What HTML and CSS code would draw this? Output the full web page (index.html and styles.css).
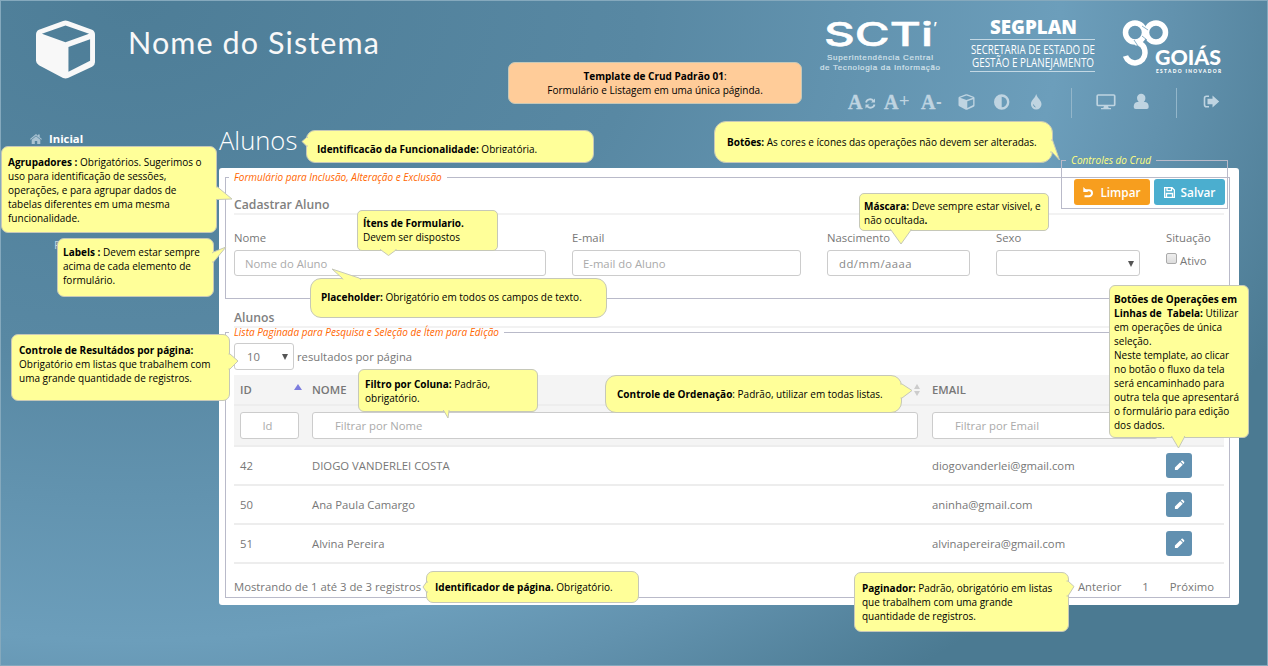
FILE: index.html
```html
<!DOCTYPE html>
<html lang="pt-BR">
<head>
<meta charset="utf-8">
<title>Nome do Sistema</title>
<link rel="stylesheet" href="styles.css">
</head>
<body>
<svg class="defs" width="0" height="0">
  <symbol id="cube" viewBox="0 0 60 60"><path fill="currentColor" fill-rule="evenodd" d="M27.500 1 Q30 0 32.500 1 L57 10 Q60 11.500 60 15 V43 Q60 46 57 47.500 L32.500 59 Q30 60 27.500 59 L3 46 Q0 44 0 41.500 V15 Q0 11.500 3 10Z M30 5.500 L6 14 L30 22.500 L54 14Z M33 27.500 V52.500 L55 41.500 V19.500Z"/></symbol>
  <symbol id="pencil" viewBox="0 0 12 12"><path fill="#fff" d="M1 8.200 L6.800 2.400 L9.600 5.200 L3.800 11 H1Z M7.500 1.700 L8.400 .9 Q9 .4 9.600 .9 L11.100 2.400 Q11.600 3 11.100 3.600 L10.300 4.500Z"/></symbol>
</svg>
<div class="app">
  <header class="header">
    <svg class="brand-icon"><use href="#cube"/></svg>
    <h1 class="system-name">Nome do Sistema</h1>
    <div class="header-right">
      <div class="logos">
        <svg class="logo-scti" viewBox="0 0 122 58" width="122" height="58">
          <g fill="#fff" font-family="Inter, sans-serif">
            <text x="4" y="27.500" font-size="33" font-weight="500" stroke="#fff" stroke-width=".5" textLength="109" lengthAdjust="spacingAndGlyphs">SCTi</text>
            <text x="113" y="15" font-size="14" font-weight="600">’</text>
            <g font-family="Liberation Sans, Arial, sans-serif" font-size="8" fill="#d3e1ea" stroke="#d3e1ea" stroke-width=".2">
              <text x="7" y="42" textLength="106">Superintendência Central</text>
              <text x="0" y="52" textLength="120">de Tecnologia da Informação</text>
            </g>
          </g>
        </svg>
        <svg class="logo-segplan" viewBox="0 0 126 58" width="126" height="58">
          <g fill="#fff" font-family="Open Sans, sans-serif">
            <text x="20" y="16" font-size="18.500" font-weight="800" textLength="87" lengthAdjust="spacingAndGlyphs">SEGPLAN</text>
            <path d="M0 21.500H125M0 53.500H125" stroke="#c3d8e4"/>
            <text x="1" y="36" font-size="12.500" textLength="124" lengthAdjust="spacingAndGlyphs">SECRETARIA DE ESTADO DE</text>
            <text x="2" y="49" font-size="12.500" textLength="122" lengthAdjust="spacingAndGlyphs">GESTÃO E PLANEJAMENTO</text>
          </g>
        </svg>
        <svg class="logo-goias" viewBox="0 0 100 58" width="100" height="58">
          <g fill="none" stroke="#fff" stroke-width="5.500">
            <circle cx="13" cy="14.500" r="9.500"/><circle cx="34" cy="14.500" r="9.500"/>
            <path d="M13 24.500Q23 25 23 35A10 10 0 0 1 3.500 38"/>
          </g>
          <path d="M12 22l4 6M20 8l6 4M20 18l5 4" stroke="#6c9db9" stroke-width=".8"/>
          <g fill="#fff" font-family="Lato, sans-serif">
            <text x="33" y="47" font-size="21" font-weight="900" textLength="66" lengthAdjust="spacingAndGlyphs">GOIÁS</text>
            <text x="34" y="54.500" font-size="4.800" font-weight="900" textLength="65">ESTADO INOVADOR</text>
          </g>
        </svg>
      </div>
      <svg class="toolbar" viewBox="840 84 390 36" width="390" height="36">
        <g fill="#bfd4e1" stroke="none" font-family="Liberation Serif, serif" font-weight="bold" font-size="20">
          <g stroke="#bfd4e1" stroke-width=".4"><text x="848" y="109">A</text><text x="884" y="109">A</text><text x="921" y="109">A</text></g>
          <text x="899" y="107" font-family="Liberation Sans, sans-serif" font-weight="normal" font-size="18">+</text>
          <text x="936" y="107" font-family="Liberation Sans, sans-serif" font-size="17">-</text>
        </g>
        <g fill="none" stroke="#bfd4e1" stroke-width="1.800"><path d="M866 102.500a4.200 4.200 0 0 1 7.500-1.500M874.500 104.500a4.200 4.200 0 0 1-7.500 1.500"/></g>
        <path fill="#bfd4e1" d="M875 98.500v4h-4zM865.500 108.500v-4h4z"/>
        <use href="#cube" x="958" y="94" width="17" height="16" color="#bfd4e1"/>
        <path fill="#bfd4e1" fill-rule="evenodd" d="M994 102a7.700 7.700 0 1 0 15.400 0a7.700 7.700 0 1 0-15.400 0M1001.700 96.700v10.600a5.300 5.300 0 0 0 0-10.600"/>
        <path fill="#bfd4e1" d="M1036.200 94c.8 3.700 5.300 6.500 5.300 10.200a5.300 5.300 0 0 1-10.600 0c0-3.700 4.500-6.500 5.300-10.200"/>
        <path d="M1033.500 104.500q0 2 2 2.500" stroke="#6b9cb8" fill="none"/>
        <path d="M1071.500 88V118M1176.500 88V118" stroke="#93b6ca"/>
        <rect x="1097.200" y="95" width="17.500" height="10.500" rx="1" fill="none" stroke="#bfd4e1" stroke-width="1.700"/>
        <path fill="#bfd4e1" d="M1104 106h4l.7 2h2.300v1.300h-10V108h2.300z"/>
        <path fill="#bfd4e1" d="M1137 98a4.200 4.200 0 1 1 8.400 0c0 2-.7 3.200-1.700 4h1.500q3.500.5 3.500 5q0 2-2 2h-11q-2 0-2-2q0-4.500 3.500-5h1.500q-1.700-1.500-1.700-4"/>
        <path d="M1209 96.300h-2.500q-2 0-2 2v6.500q0 2 2 2h2.500" fill="none" stroke="#bfd4e1" stroke-width="1.600"/>
        <path fill="#bfd4e1" d="M1207.500 98.800h5v-3.300l6.700 6-6.700 6v-3.300h-5z"/>
      </svg>
    </div>
  </header>

  <div class="body">
    <nav class="sidebar">
      <a class="nav-home"><svg width="12" height="10" viewBox="0 0 12 10"><path fill="#aac3d2" d="M0 5L6 0l2 1.700V.5h1.700v2.700L12 5l-.7.800L6 1.500.7 5.800zM1.700 5.700L6 2.300l4.300 3.400V10H7.200V7H4.800v3H1.700z"/></svg>Inicial</a>
      <a class="nav-item">F</a>
    </nav>
    <main class="main">
      <h2 class="page-title">Alunos</h2>
      <section class="panel">
        <div class="section-head form-head">
          <h3>Cadastrar Aluno</h3>
          <div class="actions">
            <button class="btn btn-clear"><svg width="11" height="11" viewBox="0 0 11 11"><path d="M2 3.200H6a2.800 2.800 0 0 1 0 6H1.500" fill="none" stroke="#fff" stroke-width="2"/><path fill="#fff" d="M.3 0v5h5z"/></svg>Limpar</button>
            <button class="btn btn-save"><svg width="11" height="11" viewBox="0 0 11 11"><path d="M.6.600H8L10.400 3v7.400H.6zM3 .6v3h4.500v-3M2.500 10.400V6.500h6v3.900" fill="none" stroke="#fff" stroke-width="1.300"/></svg>Salvar</button>
          </div>
        </div>
        <div class="form">
          <div class="field"><span>Nome</span><div class="input">Nome do Aluno</div></div>
          <div class="field"><span>E-mail</span><div class="input">E-mail do Aluno</div></div>
          <div class="field"><span>Nascimento</span><div class="input date">dd/mm/aaaa</div></div>
          <div class="field"><span>Sexo</span><div class="input select"><i class="caret"></i></div></div>
          <div class="field"><span>Situação</span><div class="check"><i class="box"></i>Ativo</div></div>
        </div>
        <div class="section-head list-head"><h3>Alunos</h3></div>
        <div class="page-size"><div class="input select size">10<i class="caret"></i></div>resultados por página</div>
        <div class="table">
          <div class="row head"><div>ID<i class="asc"></i></div><div>NOME<i class="sort"></i></div><div>EMAIL</div><div></div></div>
          <div class="row filters"><div><div class="input center">Id</div></div><div><div class="input wide">Filtrar por Nome</div></div><div><div class="input wide">Filtrar por Email</div></div><div></div></div>
          <div class="row"><div>42</div><div>DIOGO VANDERLEI COSTA</div><div>diogovanderlei@gmail.com</div><div><button class="edit"><svg><use href="#pencil"/></svg></button></div></div>
          <div class="row"><div>50</div><div>Ana Paula Camargo</div><div>aninha@gmail.com</div><div><button class="edit"><svg><use href="#pencil"/></svg></button></div></div>
          <div class="row"><div>51</div><div>Alvina Pereira</div><div>alvinapereira@gmail.com</div><div><button class="edit"><svg><use href="#pencil"/></svg></button></div></div>
        </div>
        <div class="list-foot"><span>Mostrando de 1 até 3 de 3 registros</span><div class="pager"><a>Anterior</a><a>1</a><a>Próximo</a></div></div>
      </section>
    </main>
  </div>

  <fieldset class="frame frame-form"><legend>Formulário para Inclusão, Alteração e Exclusão</legend></fieldset>
  <fieldset class="frame frame-list"><legend>Lista Paginada para Pesquisa e Seleção de Ítem para Edição</legend></fieldset>
  <fieldset class="frame frame-crud"><legend>Controles do Crud</legend></fieldset>

  <div class="note n-template"><b>Template de Crud Padrão 01</b>:<br>Formulário e Listagem em uma única páginda.</div>
  <div class="note n-group"><b>Agrupadores :</b> Obrigatórios. Sugerimos o<br>uso para identificação de sessões,<br>operações, e para agrupar dados de<br>tabelas diferentes em uma mesma<br>funcionalidade.</div>
  <div class="note n-labels"><b>Labels :</b> Devem estar sempre<br>acima de cada elemento de<br>formulário.</div>
  <div class="note n-title"><div class="clip"><b>Identificação da Funcionalidade:</b> Obrigatória.</div></div>
  <div class="note n-buttons"><b>Botões:</b> As cores e ícones das operações não devem ser alteradas.</div>
  <div class="note n-items"><b>Ítens de Formulario.</b><br>Devem ser dispostos</div>
  <div class="note n-placeholder"><b>Placeholder:</b> Obrigatório em todos os campos de texto.</div>
  <div class="note n-mask"><b>Máscara:</b> Deve sempre estar visivel, e<br>não ocultada<b>.</b></div>
  <div class="note n-ops"><b>Botões de Operações em<br>Linhas de&nbsp; Tabela:</b> Utilizar<br>em operações de única<br>seleção.<br>Neste template, ao clicar<br>no botão o fluxo da tela<br>será encaminhado para<br>outra tela que apresentará<br>o formulário para edição<br>dos dados.</div>
  <div class="note n-results"><b>Controle de Resultádos por página:</b><br>Obrigatório em listas que trabalhem com<br>uma grande quantidade de registros.</div>
  <div class="note n-filter"><b>Filtro por Coluna:</b> Padrão,<br>obrigatório.</div>
  <div class="note n-order"><b>Controle de Ordenação</b>: Padrão, utilizar em todas listas.</div>
  <div class="note n-pageid"><b>Identificador de página.</b> Obrigatório.</div>
  <div class="note n-pager"><b>Paginador:</b> Padrão, obrigatório em listas<br>que trabalhem com uma grande<br>quantidade de registros.</div>
  <svg class="tails" width="1268" height="666">
    <path d="M216 187L217.500 187L232 199L217.500 199.500L216 199.500"/>
    <path d="M212 253L213.500 252L226 247L213.500 262L212 262"/>
    <path d="M308 137.500L306.500 137.500L302 141.500L306.500 146L308 146"/>
    <path d="M1051 140L1052.500 140L1059.500 160L1052 152L1050 152"/>
    <path d="M380 249L381 250L388.500 255.500L396 250L396 249"/>
    <path d="M343 279.500L342 278L332 269L359 278L361 279.500"/>
    <path d="M890 229L891 230L901 244L911 230L911 229"/>
    <path d="M1171.500 436L1172 437L1178.500 448L1184.500 437L1184.500 436"/>
    <path d="M228.500 354L230 354L238 361L230 369L228.500 369"/>
    <path d="M443 410L444 411L448 418L449 411L449 410"/>
    <path d="M900.500 384L902 384L912 390.500L902 398L900.500 398"/>
    <path d="M428 582L426.500 582L423 587L426.500 592L428 592"/>
    <path d="M1066.500 581L1068 581L1074 586.500L1068 596L1066.500 596"/>
  </svg>
</div>
</body>
</html>
```
FILE: styles.css
```css
* { box-sizing: border-box; }
body { margin: 0; font-family: "Open Sans", "Noto Sans", sans-serif; font-size: 11.3px; color: #777; }
h1, h2, h3 { margin: 0; font-weight: normal; }
button { font: inherit; border: 0; padding: 0; }
.defs { position: absolute; }
.app { position: relative; width: 1268px; height: 666px; overflow: hidden;
  border: 1px solid #85a9bd;
  background: radial-gradient(ellipse 930px 640px at 130px 0, #4d7d97 0%, #5888a3 55%, #6c9ebb 100%, #6292ae 112%, #4b7a92 134%); }

.header { display: flex; height: 119px; padding-left: 35px; color: #f8f8f8; }
.brand-icon { width: 59px; height: 59px; margin-top: 19px; }
.system-name { margin: 23px 0 0 33px; font: 400 30.5px/36px Lato, sans-serif; letter-spacing: 1.1px; width: 692px; }
.header-right { display: flex; flex-direction: column; }
.header-right svg { overflow: visible; }
.logos { display: flex; gap: 28px; padding-top: 17px; height: 83px; }
.logo-segplan { width: 126px; }
.logo-goias { margin-left: -2px; }
.toolbar { margin-left: 20px; }

.body { display: flex; }
.sidebar { width: 218px; padding: 11px 0 0 29px; display: flex; flex-direction: column; color: #fff; }
.nav-home { display: flex; align-items: center; gap: 7px; font-weight: 700; font-size: 11.3px; line-height: 16px; }
.nav-item { margin: 90px 0 0 24px; color: #c5d6e0; }
.main { width: 1020px; }
.page-title { height: 48px; font-weight: 300; font-size: 25.6px; line-height: 41px; color: #fff; }
.panel { height: 437px; background: #fff; border-radius: 3px; padding: 10px 15px 0; }
.section-head { display: flex; justify-content: space-between; border-bottom: 2px solid #f2f2f2; }
.section-head h3 { font-size: 12.2px; font-weight: 600; line-height: 18px; color: #808080; }
.form-head { height: 37px; }
.form-head h3 { margin-top: 18px; }
.actions { display: flex; gap: 4px; padding-top: 1px; margin-right: -1px; }
.btn { height: 26px; border-radius: 3px; color: #fff; font-weight: 600; font-size: 11.8px; display: flex; align-items: center; justify-content: center; gap: 6px; }
.btn-clear { width: 76px; background: #f79e1e; }
.btn-save { width: 71px; background: #4baecf; }
.form { display: grid; grid-template-columns: 312px 229px 143px 144px 58px; gap: 26px; padding-top: 14px; height: 93px; }
.field > span { display: block; line-height: 17px; height: 21px; }
.input { height: 27px; border: 1px solid #ccc; border-radius: 3px; background: #fff; color: #aaa; line-height: 25px; padding-left: 10px; position: relative; white-space: nowrap; }
.field .input { height: 26px; line-height: 25px; }
.date { color: #888; letter-spacing: .5px; padding-left: 11px; }
.caret { position: absolute; right: 5px; top: 10px; border: 3px solid transparent; border-top: 6px solid #555; border-bottom: 0; }
.check { display: flex; gap: 3px; line-height: 21px; }
.box { width: 11px; height: 11px; margin-top: 3px; border: 1px solid #aaa; border-radius: 2px; background: linear-gradient(#eee, #ddd); }
.list-head { height: 20px; }
.list-head h3 { line-height: 18px; padding-top: 1px; }
.page-size { display: flex; gap: 3px; padding-top: 15px; height: 47px; line-height: 27px; }
.size { width: 60px; color: #777; padding-left: 12px; }
.row { display: grid; grid-template-columns: 72px 620px 234px 64px; height: 39px; align-items: center; border-bottom: 2px solid #ededed; }
.row > div { padding: 0 6px; position: relative; }
.row.head { height: 31px; background: #f4f4f4; font-weight: 600; }
.row.filters { height: 41px; background: #f4f4f4; }
.center { text-align: center; padding: 0 4px 0 0; margin-right: 1px; }
.wide { padding-left: 22px; margin-right: -4px; }
.row.filters > div:nth-child(2) .wide { margin-right: 2px; }
.asc { position: absolute; right: 4px; top: 2px; border: 4px solid transparent; border-bottom: 6px solid #7d7dde; border-top: 0; }
.sort::before, .sort::after { content: ""; position: absolute; right: 6px; border: 3.5px solid transparent; }
.sort::before { top: 2px; border-bottom: 5px solid #ccc; border-top: 0; }
.sort::after { top: 9px; border-top: 5px solid #ccc; border-bottom: 0; }
.edit { display: flex; align-items: center; justify-content: center; width: 26px; height: 25px; border-radius: 3px; background: #6190b0; }
.edit svg { width: 11px; height: 11px; }
.list-foot { display: flex; justify-content: space-between; padding: 14px 10px 0 0; line-height: 17px; }
.pager { display: flex; gap: 21px; }

.frame { position: absolute; margin: 0; padding: 0 0 0 3px; border: 1px solid #b9bac9; min-width: 0; }
.frame legend { font-style: italic; font-size: 10px; line-height: 14px; color: #f60; padding: 0 5px; white-space: nowrap; }
.frame-form { left: 224px; top: 169px; width: 1005px; height: 129px; }
.frame-list { left: 224px; top: 324px; width: 1005px; height: 273px; }
.frame-crud { left: 1060px; top: 152px; width: 167px; height: 56px; padding-left: 4px; }
.frame-crud legend { color: #ffff80; }

.note { position: absolute; border: 1px solid #c6c8b8; border-radius: 7px; background: #ff9; color: #000; font-size: 10px; line-height: 14px; white-space: nowrap; }
.n-template { left: 507px; top: 61px; width: 294px; height: 42px; padding-top: 6px; text-align: center; background: #fc9; }
.n-group { left: 0; top: 145px; width: 216px; height: 87px; padding: 8px 6px; }
.n-labels { left: 56px; top: 237px; width: 157px; height: 59px; padding: 6px 5px; }
.n-title { left: 305px; top: 129px; width: 288px; height: 33px; padding: 11px 10px; border-radius: 9px; }
.clip { height: 11px; overflow: hidden; }
.n-buttons { left: 713px; top: 120px; width: 339px; height: 42px; padding: 13px 12px; border-radius: 12px; }
.n-items { left: 356px; top: 209px; width: 141px; height: 41px; padding: 5px; border-radius: 5px; }
.n-placeholder { left: 309px; top: 277px; width: 297px; height: 40px; padding: 11px 10px; border-radius: 11px; }
.n-mask { left: 858px; top: 192px; width: 190px; height: 38px; padding: 5px 4px; border-radius: 5px; }
.n-ops { left: 1108px; top: 284px; width: 140px; height: 153px; padding: 6px 4px; border-radius: 6px; }
.n-results { left: 10px; top: 333px; width: 219px; height: 67px; padding: 8px 7px; }
.n-filter { left: 357px; top: 368px; width: 180px; height: 43px; padding: 7px 6px; border-radius: 6px; }
.n-order { left: 604px; top: 374px; width: 297px; height: 38px; padding: 11px; border-radius: 11px; }
.n-pageid { left: 425px; top: 570px; width: 213px; height: 32px; padding: 8px; }
.n-pager { left: 853px; top: 571px; width: 215px; height: 60px; padding: 8px 7px; }
.tails { position: absolute; left: -1px; top: -1px; fill: #ff9; stroke: #c6c8b8; }
```
